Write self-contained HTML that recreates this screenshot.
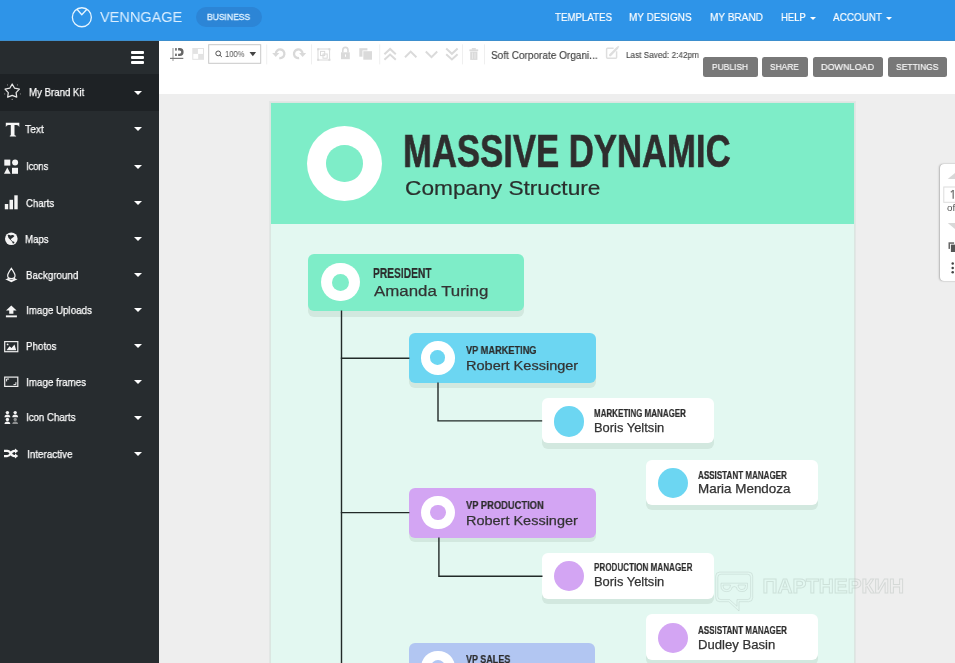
<!DOCTYPE html>
<html><head><meta charset="utf-8">
<style>
*{margin:0;padding:0;box-sizing:border-box}
html,body{width:955px;height:663px;overflow:hidden;font-family:"Liberation Sans",sans-serif;background:#eeeeee;position:relative}
.abs{position:absolute}
.tx{position:absolute;white-space:nowrap;transform-origin:0 0;will-change:transform}
</style></head><body>
<div class="abs" style="left:0;top:0;width:955px;height:41px;background:#2e94e8"></div>
<div class="abs" style="left:0;top:40px;width:955px;height:1px;background:#3d8fce"></div>
<svg class="abs" style="left:70px;top:5px" width="24" height="24" viewBox="0 0 24 24">
<circle cx="11.85" cy="12.25" r="9.5" fill="none" stroke="#e6f5ff" stroke-width="1.3"/>
<polyline points="7.0,4.2 11.8,9.7 17.1,4.0" fill="none" stroke="#e6f5ff" stroke-width="1.3" stroke-linejoin="round"/></svg>
<div class="tx" style="left:99.80px;top:9px;font-size:15.41px;line-height:15.41px;color:#dcefff;transform:scaleX(0.9421);">VENNGAGE</div>
<div class="abs" style="left:196px;top:6.5px;width:66px;height:20.5px;border-radius:10.5px;background:#2c85d6"></div>
<div class="tx" style="left:206.90px;top:13px;font-size:9.30px;line-height:9.30px;color:#dff1ff;transform:scaleX(0.9187);-webkit-text-stroke:0.35px #dff1ff;">BUSINESS</div>
<div class="tx" style="left:555.00px;top:12px;font-size:11.48px;line-height:11.48px;color:#ffffff;transform:scaleX(0.8457);-webkit-text-stroke:0.2px #fff;">TEMPLATES</div>
<div class="tx" style="left:629.40px;top:12px;font-size:11.48px;line-height:11.48px;color:#ffffff;transform:scaleX(0.8709);-webkit-text-stroke:0.2px #fff;">MY DESIGNS</div>
<div class="tx" style="left:709.70px;top:12px;font-size:11.48px;line-height:11.48px;color:#ffffff;transform:scaleX(0.8775);-webkit-text-stroke:0.2px #fff;">MY BRAND</div>
<div class="tx" style="left:780.90px;top:12px;font-size:11.48px;line-height:11.48px;color:#ffffff;transform:scaleX(0.8275);-webkit-text-stroke:0.2px #fff;">HELP</div>
<div class="tx" style="left:832.60px;top:12px;font-size:11.48px;line-height:11.48px;color:#ffffff;transform:scaleX(0.8630);-webkit-text-stroke:0.2px #fff;">ACCOUNT</div>
<div class="abs" style="left:809.9px;top:16.6px;width:0;height:0;border-left:3px solid transparent;border-right:3px solid transparent;border-top:3px solid #fff"></div>
<div class="abs" style="left:886.4px;top:16.6px;width:0;height:0;border-left:3px solid transparent;border-right:3px solid transparent;border-top:3px solid #fff"></div>
<div class="abs" style="left:0;top:41px;width:159px;height:622px;background:#272c2f"></div>
<div class="abs" style="left:0;top:74px;width:159px;height:36.5px;background:#1e2225"></div>
<div class="abs" style="left:131px;top:51px;width:13px;height:3px;border-radius:1px;background:#fff"></div>
<div class="abs" style="left:131px;top:56px;width:13px;height:3px;border-radius:1px;background:#fff"></div>
<div class="abs" style="left:131px;top:61px;width:13px;height:3px;border-radius:1px;background:#fff"></div>
<div class="tx" style="left:28.50px;top:87px;font-size:11.34px;line-height:11.34px;color:#ffffff;transform:scaleX(0.8520);-webkit-text-stroke:0.25px #fff;">My Brand Kit</div>
<div class="abs" style="left:133.5px;top:90.6px;width:0;height:0;border-left:4.3px solid transparent;border-right:4.3px solid transparent;border-top:4.8px solid #fff"></div>
<div class="tx" style="left:25.10px;top:124px;font-size:11.34px;line-height:11.34px;color:#ffffff;transform:scaleX(0.9037);-webkit-text-stroke:0.25px #fff;">Text</div>
<div class="abs" style="left:133.5px;top:127.4px;width:0;height:0;border-left:4.3px solid transparent;border-right:4.3px solid transparent;border-top:4.8px solid #fff"></div>
<div class="tx" style="left:25.70px;top:161px;font-size:11.34px;line-height:11.34px;color:#ffffff;transform:scaleX(0.8230);-webkit-text-stroke:0.25px #fff;">Icons</div>
<div class="abs" style="left:133.5px;top:164.6px;width:0;height:0;border-left:4.3px solid transparent;border-right:4.3px solid transparent;border-top:4.8px solid #fff"></div>
<div class="tx" style="left:25.70px;top:198px;font-size:11.34px;line-height:11.34px;color:#ffffff;transform:scaleX(0.8416);-webkit-text-stroke:0.25px #fff;">Charts</div>
<div class="abs" style="left:133.5px;top:200.8px;width:0;height:0;border-left:4.3px solid transparent;border-right:4.3px solid transparent;border-top:4.8px solid #fff"></div>
<div class="tx" style="left:25.30px;top:234px;font-size:11.34px;line-height:11.34px;color:#ffffff;transform:scaleX(0.8514);-webkit-text-stroke:0.25px #fff;">Maps</div>
<div class="abs" style="left:133.5px;top:237.0px;width:0;height:0;border-left:4.3px solid transparent;border-right:4.3px solid transparent;border-top:4.8px solid #fff"></div>
<div class="tx" style="left:25.70px;top:270px;font-size:11.34px;line-height:11.34px;color:#ffffff;transform:scaleX(0.8647);-webkit-text-stroke:0.25px #fff;">Background</div>
<div class="abs" style="left:133.5px;top:272.8px;width:0;height:0;border-left:4.3px solid transparent;border-right:4.3px solid transparent;border-top:4.8px solid #fff"></div>
<div class="tx" style="left:25.80px;top:305px;font-size:11.34px;line-height:11.34px;color:#ffffff;transform:scaleX(0.8657);-webkit-text-stroke:0.25px #fff;">Image Uploads</div>
<div class="abs" style="left:133.5px;top:308.3px;width:0;height:0;border-left:4.3px solid transparent;border-right:4.3px solid transparent;border-top:4.8px solid #fff"></div>
<div class="tx" style="left:25.70px;top:341px;font-size:11.34px;line-height:11.34px;color:#ffffff;transform:scaleX(0.8665);-webkit-text-stroke:0.25px #fff;">Photos</div>
<div class="abs" style="left:133.5px;top:344.4px;width:0;height:0;border-left:4.3px solid transparent;border-right:4.3px solid transparent;border-top:4.8px solid #fff"></div>
<div class="tx" style="left:25.70px;top:377px;font-size:11.34px;line-height:11.34px;color:#ffffff;transform:scaleX(0.8683);-webkit-text-stroke:0.25px #fff;">Image frames</div>
<div class="abs" style="left:133.5px;top:380.3px;width:0;height:0;border-left:4.3px solid transparent;border-right:4.3px solid transparent;border-top:4.8px solid #fff"></div>
<div class="tx" style="left:25.70px;top:412px;font-size:11.34px;line-height:11.34px;color:#ffffff;transform:scaleX(0.8553);-webkit-text-stroke:0.25px #fff;">Icon Charts</div>
<div class="abs" style="left:133.5px;top:415.6px;width:0;height:0;border-left:4.3px solid transparent;border-right:4.3px solid transparent;border-top:4.8px solid #fff"></div>
<div class="tx" style="left:27.20px;top:449px;font-size:11.34px;line-height:11.34px;color:#ffffff;transform:scaleX(0.8715);-webkit-text-stroke:0.25px #fff;">Interactive</div>
<div class="abs" style="left:133.5px;top:451.7px;width:0;height:0;border-left:4.3px solid transparent;border-right:4.3px solid transparent;border-top:4.8px solid #fff"></div>
<svg class="abs" style="left:0;top:78px" width="24" height="400" viewBox="0 78 24 400">
<polygon points="12.20,84.0 14.61,88.2 19.4,89.1 16.10,92.57 16.73,97.2 12.20,95.3 7.67,97.2 8.30,92.57 5.0,89.1 9.79,88.2" fill="none" stroke="#e6e6e6" stroke-width="1.25" stroke-linejoin="round"/>
<circle cx="7.5" cy="84.9" r="0.55" fill="#888"/><circle cx="17.5" cy="84.9" r="0.55" fill="#888"/><circle cx="4.7" cy="93.9" r="0.55" fill="#888"/><circle cx="20.4" cy="93.9" r="0.55" fill="#888"/><circle cx="12.2" cy="99.4" r="0.55" fill="#aaa"/>
<path d="M5.8,122.8 H19.3 V127.1 Q18.6,125.2 16.4,125.1 H14.5 V134.8 Q14.6,135.6 16.1,135.8 V136.6 H9.8 V135.8 Q10.7,135.6 10.8,134.8 V125.1 H8.7 Q6.5,125.2 5.8,127.1 Z" fill="#f6f6f6"/>
<rect x="4.3" y="159.6" width="6" height="6" fill="#f4f4f4"/>
<circle cx="15.1" cy="162.6" r="3" fill="#f4f4f4"/>
<polygon points="7.3,167.6 10.6,173.8 4,173.8" fill="#f4f4f4"/>
<rect x="12" y="167.8" width="6" height="6" fill="#f4f4f4"/>
<rect x="4.8" y="204" width="3.4" height="5.3" fill="#f4f4f4"/>
<rect x="9.5" y="199.8" width="3.5" height="9.5" fill="#f4f4f4"/>
<rect x="14.3" y="195.3" width="3.4" height="14" fill="#f4f4f4"/>
<circle cx="11.3" cy="238.8" r="6.3" fill="#f4f4f4"/>
<path d="M7.6,235.0 Q9.2,234.2 10.6,235.5 Q11.8,234.5 13.0,235.1 L14.5,236.1 Q13.4,237.7 11.8,238.3 Q11.0,239.1 10.5,240.0 Q8.0,238.6 7.6,235.0 Z" fill="#272c2f"/><path d="M10.4,239.6 L13.0,242.2" stroke="#272c2f" stroke-width="0.8"/>
<circle cx="13.4" cy="242.6" r="1.0" fill="#272c2f"/>
<path d="M11.35,268.4 Q14.7,273.2 15.0,275.2 Q15.3,278.6 11.35,278.7 Q7.4,278.6 7.7,275.2 Q8.0,273.2 11.35,268.4 Z" fill="none" stroke="#f4f4f4" stroke-width="1.2"/>
<path d="M5.2,279.3 Q7.6,279 8.2,277.4 Q9.2,279.6 11.35,279.7 Q13.5,279.6 14.5,277.4 Q15.1,279 17.5,279.3 L11.35,282.2 Z" fill="#f4f4f4"/>
<polygon points="11.3,305.4 16.6,310.4 13.4,310.4 13.4,313.8 9.2,313.8 9.2,310.4 6,310.4" fill="#f4f4f4"/>
<rect x="5.9" y="315.4" width="11" height="1.9" fill="#f4f4f4"/>
<rect x="4.7" y="341.6" width="13.1" height="10.1" fill="none" stroke="#eee" stroke-width="1.2"/>
<circle cx="7.6" cy="344.4" r="0.9" fill="#f4f4f4"/>
<polygon points="6.5,350.2 9.5,346.2 11.5,348 14.5,344.4 16.2,350.2" fill="#f4f4f4"/>
<rect x="4.7" y="377.1" width="13.1" height="9.3" fill="none" stroke="#eee" stroke-width="1.2"/>
<path d="M6.6,381.4 V379 H9" fill="none" stroke="#eee" stroke-width="1"/>
<path d="M15.9,382.2 V384.6 H13.5" fill="none" stroke="#eee" stroke-width="1"/>
<g fill="#f4f4f4"><circle cx="7.4" cy="412.6" r="1.7"/><path d="M4.5,417.2 Q4.6,414.7 7.4,414.6 Q10.2,414.7 10.3,417.2 Z"/><circle cx="15.2" cy="412.6" r="1.7"/><path d="M12.3,417.2 Q12.4,414.7 15.2,414.6 Q18.0,414.7 18.1,417.2 Z"/><circle cx="7.4" cy="419.5" r="1.7"/><path d="M4.5,424.1 Q4.6,421.6 7.4,421.5 Q10.2,421.6 10.3,424.1 Z"/></g>
<g fill="#8d8f90"><circle cx="15.2" cy="419.5" r="1.7"/><path d="M12.3,424.1 Q12.4,421.6 15.2,421.5 Q18.0,421.6 18.1,424.1 Z"/></g>
<path d="M4,450.9 H7.2 Q9.4,450.9 10.8,453.5 Q12.2,456.1 14.6,456.1 H15.6" fill="none" stroke="#f6f6f6" stroke-width="2.2"/>
<path d="M4,456.1 H7.2 Q9.4,456.1 10.8,453.5 Q12.2,450.9 14.6,450.9 H15.6" fill="none" stroke="#f6f6f6" stroke-width="2.2"/>
<polygon points="15.0,448.4 18.2,450.9 15.0,453.4" fill="#f6f6f6"/>
<polygon points="15.0,453.6 18.2,456.1 15.0,458.6" fill="#f6f6f6"/>
</svg>

<div class="abs" style="left:159px;top:41px;width:796px;height:53px;background:#fff"></div>
<div class="abs" style="left:159px;top:94px;width:796px;height:569px;background:#eeeeee"></div>
<svg class="abs" style="left:159px;top:40px" width="796" height="54" viewBox="159 40 796 54">
<rect x="172.1" y="48" width="1.8" height="13" fill="#c6c6c6"/>
<rect x="170" y="57.8" width="13.3" height="1.2" fill="#7a7a7a"/>
<rect x="175" y="48.1" width="1.9" height="2.5" fill="#7a7a7a"/><rect x="175" y="53.6" width="1.9" height="2.4" fill="#7a7a7a"/>
<path d="M178.1,48.1 H179.6 A4.0,3.95 0 0 1 179.6,56 H178.1 V53.7 H179.6 A1.65,1.65 0 0 0 179.6,50.4 H178.1 Z" fill="#666"/>
<rect x="192.3" y="48" width="11.7" height="11.8" fill="#e3e3e3"/>
<rect x="197.9" y="49" width="5.1" height="4.9" fill="#fff"/>
<rect x="193.3" y="53.9" width="4.9" height="4.9" fill="#fff"/>
<rect x="208.7" y="44.7" width="52" height="18.6" fill="#fff" stroke="#c8c8c8" stroke-width="1"/>
<circle cx="218.2" cy="53.4" r="2.4" fill="none" stroke="#555" stroke-width="1"/>
<line x1="219.9" y1="55.1" x2="221.9" y2="57" stroke="#555" stroke-width="1"/>
<polygon points="249.5,52.1 256.1,52.1 252.8,56.3" fill="#444"/>
<g fill="#efefef"><rect x="266.2" y="44.4" width="1" height="20"/><rect x="311" y="44.4" width="1" height="20"/><rect x="379.2" y="44.4" width="1" height="20"/><rect x="462" y="44.4" width="1" height="20"/><rect x="484" y="44.4" width="1" height="20"/></g>
<path d="M275.8,53.7 A4.3,4.3 0 1 1 279.3,58.0" fill="none" stroke="#d9d9d9" stroke-width="2.3"/>
<polygon points="272.2,53.0 279.3,53.0 275.75,57.0" fill="#d9d9d9"/>
<path d="M302.6,53.7 A4.3,4.3 0 1 0 299.1,58.0" fill="none" stroke="#d9d9d9" stroke-width="2.3"/>
<polygon points="306.2,53.0 299.1,53.0 302.65,57.0" fill="#d9d9d9"/>
<rect x="318" y="49" width="11.6" height="11" fill="none" stroke="#dadada" stroke-width="1"/>
<g fill="#dadada"><rect x="317.2" y="48.3" width="2" height="2"/><rect x="328.4" y="48.3" width="2" height="2"/><rect x="317.2" y="58.8" width="2" height="2"/><rect x="328.4" y="58.8" width="2" height="2"/></g>
<rect x="320.5" y="51.4" width="4.2" height="4.2" fill="none" stroke="#dadada" stroke-width="1"/>
<rect x="323" y="54" width="4.2" height="4.2" fill="none" stroke="#dadada" stroke-width="1"/>
<path d="M342.8,52.6 V50.2 Q342.8,47.4 345.4,47.4 Q348,47.4 348,50.2 V52.6" fill="none" stroke="#dadada" stroke-width="1.6"/>
<rect x="341" y="52.3" width="8.8" height="6.9" fill="#dadada"/>
<rect x="345" y="54.4" width="1" height="2.4" fill="#fff"/>
<rect x="359.3" y="48.2" width="8.1" height="8.5" fill="#dadada"/>
<rect x="362.5" y="50.4" width="10.3" height="10.1" fill="#fff"/>
<rect x="363.3" y="51.2" width="8.7" height="8.5" fill="#dadada"/>
<g fill="none" stroke="#dadada" stroke-width="2.0" stroke-linejoin="miter">
<polyline points="384.4,54.2 390.1,48.9 395.8,54.2"/><polyline points="384.4,59.8 390.1,54.5 395.8,59.8"/>
<polyline points="405,57.2 410.7,51.6 416.4,57.2"/>
<polyline points="425.8,51.5 431.5,57.1 437.2,51.5"/>
<polyline points="446.2,48.6 451.9,53.8 457.6,48.6"/><polyline points="446.2,54.2 451.9,59.4 457.6,54.2"/>
</g>
<rect x="469.4" y="49.4" width="8.8" height="1.8" fill="#dadada"/>
<rect x="471.8" y="48.1" width="4" height="1.6" fill="#dadada"/>
<rect x="470.2" y="51.6" width="7.2" height="8.3" fill="#dadada"/>
<rect x="472.1" y="52.6" width="0.8" height="6.2" fill="#ededed"/><rect x="474.6" y="52.6" width="0.8" height="6.2" fill="#ededed"/>
<path d="M613.6,48.2 H607.6 Q606.6,48.2 606.6,49.2 V57.2 Q606.6,58.2 607.6,58.2 H615.6 Q616.6,58.2 616.6,57.2 V51.2" fill="none" stroke="#dedede" stroke-width="1.5"/>
<path d="M610.2,55.2 L617.2,48.0" stroke="#dedede" stroke-width="2.4" stroke-linecap="round"/><path d="M617.6,46.2 L618.8,47.4" stroke="#e2e2e2" stroke-width="1.6"/>
</svg>

<div class="tx" style="left:225.30px;top:50px;font-size:8.43px;line-height:8.43px;color:#555;transform:scaleX(0.9082);">100%</div>
<div class="tx" style="left:490.50px;top:50px;font-size:11.05px;line-height:11.05px;color:#404040;transform:scaleX(0.9091);-webkit-text-stroke:0.15px #404040;">Soft Corporate Organi...</div>
<div class="tx" style="left:625.50px;top:51px;font-size:9.16px;line-height:9.16px;color:#444;transform:scaleX(0.8950);-webkit-text-stroke:0.1px #444;">Last Saved: 2:42pm</div>
<div class="abs" style="left:703.1px;top:56.5px;width:54.5px;height:20.3px;border-radius:2.5px;background:#787878"></div>
<div class="tx" style="left:712.30px;top:62px;font-size:9.59px;line-height:9.59px;color:#f8f8f8;transform:scaleX(0.8792);-webkit-text-stroke:0.2px #f8f8f8;">PUBLISH</div>
<div class="abs" style="left:762.2px;top:56.5px;width:45.9px;height:20.3px;border-radius:2.5px;background:#787878"></div>
<div class="tx" style="left:770.40px;top:62px;font-size:9.59px;line-height:9.59px;color:#f8f8f8;transform:scaleX(0.8745);-webkit-text-stroke:0.2px #f8f8f8;">SHARE</div>
<div class="abs" style="left:813.0px;top:56.5px;width:70.2px;height:20.3px;border-radius:2.5px;background:#787878"></div>
<div class="tx" style="left:820.90px;top:62px;font-size:9.59px;line-height:9.59px;color:#f8f8f8;transform:scaleX(0.9415);-webkit-text-stroke:0.2px #f8f8f8;">DOWNLOAD</div>
<div class="abs" style="left:888.2px;top:56.5px;width:58.8px;height:20.3px;border-radius:2.5px;background:#787878"></div>
<div class="tx" style="left:895.80px;top:62px;font-size:9.59px;line-height:9.59px;color:#f8f8f8;transform:scaleX(0.8861);-webkit-text-stroke:0.2px #f8f8f8;">SETTINGS</div>
<div class="abs" style="left:269px;top:101px;width:587px;height:562px;background:#e3e6e5"></div>
<div class="abs" style="left:270px;top:102px;width:585px;height:561px;background:#dbe6e1"></div>
<div class="abs" style="left:271px;top:103px;width:583px;height:560px;background:#e3f8f1"></div>
<div class="abs" style="left:271px;top:103px;width:583px;height:121.4px;background:#7eedc8"></div>
<div class="abs" style="left:307.05px;top:125.85px;width:75.30px;height:75.30px;border-radius:50%;background:#fff"></div><div class="abs" style="left:326.45px;top:145.25px;width:36.50px;height:36.50px;border-radius:50%;background:#7eedc8"></div>
<div class="tx" style="left:403.20px;top:128px;font-size:46.80px;line-height:46.80px;font-weight:bold;color:#2e2e2e;transform:scaleX(0.7411);-webkit-text-stroke:0.6px #2e2e2e;">MASSIVE DYNAMIC</div>
<div class="tx" style="left:404.50px;top:178px;font-size:20.78px;line-height:20.78px;color:#2a2f2d;transform:scaleX(1.0924);-webkit-text-stroke:0.2px #2a2f2d;">Company Structure</div>
<div class="abs" style="left:307.90px;top:260.20px;width:215.80px;height:56.60px;border-radius:6.0px;background:#d2e8df"></div><div class="abs" style="left:307.90px;top:254.00px;width:215.80px;height:56.60px;border-radius:6.0px;background:#7eedc8"></div>
<div class="abs" style="left:321.40px;top:263.10px;width:38.40px;height:38.40px;border-radius:50%;background:#fff"></div><div class="abs" style="left:331.85px;top:273.55px;width:17.50px;height:17.50px;border-radius:50%;background:#7eedc8"></div>
<div class="tx" style="left:373.40px;top:266px;font-size:14.24px;line-height:14.24px;font-weight:bold;color:#2b2b2b;transform:scaleX(0.7186);-webkit-text-stroke:0.2px #2b2b2b;">PRESIDENT</div>
<div class="tx" style="left:373.60px;top:283px;font-size:15.26px;line-height:15.26px;color:#333333;transform:scaleX(1.1056);-webkit-text-stroke:0.25px #333;">Amanda Turing</div>
<div class="abs" style="left:409.30px;top:338.20px;width:186.60px;height:49.40px;border-radius:6.0px;background:#d2e8df"></div><div class="abs" style="left:409.30px;top:333.20px;width:186.60px;height:49.40px;border-radius:6.0px;background:#6cd6f2"></div>
<div class="abs" style="left:420.85px;top:340.95px;width:33.70px;height:33.70px;border-radius:50%;background:#fff"></div><div class="abs" style="left:430.35px;top:350.45px;width:14.70px;height:14.70px;border-radius:50%;background:#6cd6f2"></div>
<div class="tx" style="left:466.00px;top:345px;font-size:11.34px;line-height:11.34px;font-weight:bold;color:#2b2b2b;transform:scaleX(0.8140);-webkit-text-stroke:0.2px #2b2b2b;">VP MARKETING</div>
<div class="tx" style="left:466.10px;top:359px;font-size:13.52px;line-height:13.52px;color:#333333;transform:scaleX(1.0745);-webkit-text-stroke:0.25px #333;">Robert Kessinger</div>
<div class="abs" style="left:542.00px;top:403.70px;width:171.90px;height:45.10px;border-radius:6.0px;background:#d2e8df"></div><div class="abs" style="left:542.00px;top:398.40px;width:171.90px;height:45.10px;border-radius:6.0px;background:#ffffff"></div>
<div class="abs" style="left:553.90px;top:406.40px;width:30.20px;height:30.20px;border-radius:50%;background:#6cd6f2"></div>
<div class="tx" style="left:594.00px;top:409px;font-size:10.47px;line-height:10.47px;font-weight:bold;color:#2b2b2b;transform:scaleX(0.7636);-webkit-text-stroke:0.2px #2b2b2b;">MARKETING MANAGER</div>
<div class="tx" style="left:594.20px;top:422px;font-size:12.50px;line-height:12.50px;color:#333333;transform:scaleX(1.0319);-webkit-text-stroke:0.25px #333;">Boris Yeltsin</div>
<div class="abs" style="left:646.00px;top:465.20px;width:172.00px;height:45.20px;border-radius:6.0px;background:#d2e8df"></div><div class="abs" style="left:646.00px;top:460.00px;width:172.00px;height:45.20px;border-radius:6.0px;background:#ffffff"></div>
<div class="abs" style="left:657.90px;top:468.00px;width:30.20px;height:30.20px;border-radius:50%;background:#6cd6f2"></div>
<div class="tx" style="left:697.70px;top:470px;font-size:11.34px;line-height:11.34px;font-weight:bold;color:#2b2b2b;transform:scaleX(0.7114);-webkit-text-stroke:0.2px #2b2b2b;">ASSISTANT MANAGER</div>
<div class="tx" style="left:698.10px;top:484px;font-size:11.92px;line-height:11.92px;color:#333333;transform:scaleX(1.1268);-webkit-text-stroke:0.25px #333;">Maria Mendoza</div>
<div class="abs" style="left:409.30px;top:492.70px;width:186.60px;height:49.80px;border-radius:6.0px;background:#d2e8df"></div><div class="abs" style="left:409.30px;top:487.90px;width:186.60px;height:49.80px;border-radius:6.0px;background:#d3a5f3"></div>
<div class="abs" style="left:421.25px;top:495.75px;width:33.50px;height:33.50px;border-radius:50%;background:#fff"></div><div class="abs" style="left:430.40px;top:504.90px;width:15.20px;height:15.20px;border-radius:50%;background:#d3a5f3"></div>
<div class="tx" style="left:466.00px;top:500px;font-size:11.05px;line-height:11.05px;font-weight:bold;color:#2b2b2b;transform:scaleX(0.8459);-webkit-text-stroke:0.2px #2b2b2b;">VP PRODUCTION</div>
<div class="tx" style="left:466.10px;top:514px;font-size:13.52px;line-height:13.52px;color:#333333;transform:scaleX(1.0707);-webkit-text-stroke:0.25px #333;">Robert Kessinger</div>
<div class="abs" style="left:542.30px;top:558.40px;width:172.20px;height:45.50px;border-radius:6.0px;background:#d2e8df"></div><div class="abs" style="left:542.30px;top:553.10px;width:172.20px;height:45.50px;border-radius:6.0px;background:#ffffff"></div>
<div class="abs" style="left:553.70px;top:561.00px;width:30.20px;height:30.20px;border-radius:50%;background:#d3a5f3"></div>
<div class="tx" style="left:593.70px;top:562px;font-size:10.90px;line-height:10.90px;font-weight:bold;color:#2b2b2b;transform:scaleX(0.7428);-webkit-text-stroke:0.2px #2b2b2b;">PRODUCTION MANAGER</div>
<div class="tx" style="left:594.20px;top:576px;font-size:12.50px;line-height:12.50px;color:#333333;transform:scaleX(1.0319);-webkit-text-stroke:0.25px #333;">Boris Yeltsin</div>
<div class="abs" style="left:646.00px;top:619.30px;width:172.00px;height:45.60px;border-radius:6.0px;background:#d2e8df"></div><div class="abs" style="left:646.00px;top:614.00px;width:172.00px;height:45.60px;border-radius:6.0px;background:#ffffff"></div>
<div class="abs" style="left:657.90px;top:622.70px;width:30.20px;height:30.20px;border-radius:50%;background:#d3a5f3"></div>
<div class="tx" style="left:697.70px;top:625px;font-size:11.48px;line-height:11.48px;font-weight:bold;color:#2b2b2b;transform:scaleX(0.7024);-webkit-text-stroke:0.2px #2b2b2b;">ASSISTANT MANAGER</div>
<div class="tx" style="left:698.10px;top:639px;font-size:12.50px;line-height:12.50px;color:#333333;transform:scaleX(1.0486);-webkit-text-stroke:0.25px #333;">Dudley Basin</div>
<div class="abs" style="left:409.10px;top:647.90px;width:186.00px;height:49.10px;border-radius:6.0px;background:#d2e8df"></div><div class="abs" style="left:409.10px;top:642.90px;width:186.00px;height:49.10px;border-radius:6.0px;background:#b2c6f2"></div>
<div class="abs" style="left:421.15px;top:650.65px;width:33.70px;height:33.70px;border-radius:50%;background:#fff"></div><div class="abs" style="left:430.65px;top:660.15px;width:14.70px;height:14.70px;border-radius:50%;background:#b2c6f2"></div>
<div class="tx" style="left:466.00px;top:654px;font-size:11.19px;line-height:11.19px;font-weight:bold;color:#2b2b2b;transform:scaleX(0.8029);-webkit-text-stroke:0.2px #2b2b2b;">VP SALES</div>
<svg class="abs" style="left:300px;top:300px" width="260" height="363" viewBox="300 300 260 363">
<g stroke="#222a28" stroke-width="1.4" fill="none" stroke-linecap="butt">
<line x1="341.5" y1="310.6" x2="341.5" y2="663"/>
<line x1="340.8" y1="358.3" x2="409.4" y2="358.3"/>
<line x1="340.8" y1="512.6" x2="409.4" y2="512.6"/>
<polyline points="438.0,382.5 438.0,420.9 542.2,420.9"/>
<polyline points="438.9,537.6 438.9,576.3 542.5,576.3"/>
</g></svg>
<div class="abs" style="left:939.5px;top:163.6px;width:30px;height:117.2px;border-radius:4px;background:#fff;box-shadow:-1px 0 2px rgba(0,0,0,0.22), 0 0 1px rgba(0,0,0,0.25)"></div>
<svg class="abs" style="left:935px;top:160px" width="20" height="125" viewBox="935 160 20 125">
<polygon points="947.7,179 955,172.9 962.3,179" fill="#d8d8d8"/>
<rect x="943.8" y="187.0" width="20" height="15.3" fill="#fff" stroke="#dcdcdc" stroke-width="1"/>
<polygon points="947.7,222.9 962.3,222.9 955,229" fill="#d8d8d8"/>
<rect x="948.5" y="242.3" width="5.6" height="6.6" fill="#666"/>
<rect x="950" y="243.8" width="6" height="8.6" fill="#fff"/>
<rect x="950.9" y="244.6" width="5" height="7.4" fill="#555"/>
<circle cx="952.7" cy="263.4" r="1.25" fill="#444"/><circle cx="952.7" cy="267.9" r="1.25" fill="#444"/><circle cx="952.7" cy="272.3" r="1.25" fill="#444"/>
</svg>
<svg class="abs" style="left:945px;top:185px" width="10" height="20" viewBox="945 185 10 20"><path d="M953.2,189.9 V198.7" stroke="#7a7a7a" stroke-width="1.35"/><path d="M953.3,190.2 L950.8,192.2" stroke="#7a7a7a" stroke-width="1.2"/></svg>
<div class="tx" style="left:946.6px;top:203px;font-size:9.8px;line-height:9.8px;color:#555">of</div>
<svg class="abs" style="left:700px;top:560px;will-change:transform" width="230" height="60" viewBox="700 560 230 60">
<g fill="none" stroke="#8a9a94" stroke-opacity="0.22" stroke-width="0.9">
<path d="M719.7,572.1 H748.7 Q752.7,572.1 752.7,576.1 V597.7 Q752.7,601.7 748.7,601.7 H739 V611 L728.8,601.7 H719.7 Q715.7,601.7 715.7,597.7 V576.1 Q715.7,572.1 719.7,572.1 Z"/>
<path d="M721,574.2 H747.5 Q750.6,574.2 750.6,577.3 V596.5 Q750.6,599.6 747.5,599.6 H737 V606.3 L729.6,599.6 H721 Q717.8,599.6 717.8,596.5 V577.3 Q717.8,574.2 721,574.2 Z"/>
<path d="M721,583.2 H747.5 V586 Q747.5,591.6 742,591.6 Q737,591.6 736.5,587.4 Q734.3,585.6 732,587.4 Q731.5,591.6 726.5,591.6 Q721,591.6 721,586 Z"/>
<path d="M723,585 H730.5 Q730,589.6 726.5,589.6 Q723,589.6 723,586 Z"/>
<path d="M738,585 H745.5 V586 Q745.5,589.6 742,589.6 Q738.5,589.6 738,585 Z"/>
</g>
<text x="762.6" y="593.2" font-family="Liberation Sans" font-weight="bold" font-size="19.4" textLength="141.5" lengthAdjust="spacingAndGlyphs" fill="none" stroke="#8a9a94" stroke-opacity="0.25" stroke-width="0.9">ПАРТНЕРКИН</text>
</svg>
</body></html>
